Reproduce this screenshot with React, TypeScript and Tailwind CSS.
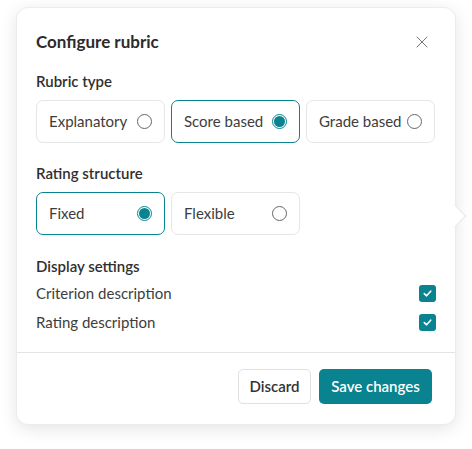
import { X } from "lucide-react"

const rubricTypes = [
  { id: "explanatory", label: "Explanatory", checked: false },
  { id: "score", label: "Score based", checked: true },
  { id: "grade", label: "Grade based", checked: false },
]

const ratingStructures = [
  { id: "fixed", label: "Fixed", checked: true },
  { id: "flexible", label: "Flexible", checked: false },
]

const displaySettings = ["Criterion description", "Rating description"]

function Radio({ checked }: { checked: boolean }) {
  if (checked) {
    return (
      <span className="flex h-[15px] w-[15px] items-center justify-center rounded-full border border-[#0a8390] bg-white">
        <span className="h-[11px] w-[11px] rounded-full bg-[#0a8390]" />
      </span>
    )
  }
  return <span className="h-[15px] w-[15px] rounded-full border border-[#666] bg-white" />
}

function Option({ label, checked }: { label: string; checked: boolean }) {
  return (
    <div
      className={`flex h-[43px] w-[129px] items-center justify-between rounded-[7px] border pl-[12px] pr-[12px] ${
        checked ? "border-[#0a8390]" : "border-[#e6e6e6]"
      }`}
    >
      <span className="text-[15px] text-[#3d3d3d]">{label}</span>
      <Radio checked={checked} />
    </div>
  )
}

function Checkbox() {
  return (
    <span className="flex h-[17px] w-[17px] items-center justify-center rounded-[3px] bg-[#0a8390]">
      <svg width="11" height="11" viewBox="0 0 12 12" fill="none">
        <path d="M2.5 6.2 5 8.5 9.5 3.5" stroke="white" strokeWidth="1.8" strokeLinecap="round" strokeLinejoin="round" />
      </svg>
    </span>
  )
}

export default function App() {
  return (
    <div className="min-h-[449px] bg-white pl-[17px] pt-[8px]" style={{ fontFamily: "Lato, 'Open Sans', sans-serif" }}>
      <div className="relative w-[438px] rounded-[11px] bg-white shadow-[0_4px_18px_rgba(0,0,0,0.12)] ring-1 ring-[#ececec]">
        <div className="absolute right-[-8px] top-[200px] h-[16px] w-[16px] rotate-45 border-r border-t border-[#e8e8e8] bg-white" />
        <div className="px-[19px] pb-[18px] pt-[22px]">
          <div className="flex h-[24px] items-center justify-between">
            <h2 className="text-[17px] font-bold text-[#2b2b2b]">Configure rubric</h2>
            <X className="mr-[4px] h-[20px] w-[20px] text-[#666]" strokeWidth={1.1} />
          </div>

          <div className="mt-[17px] text-[15px] font-semibold leading-[20px] text-[#2f2f2f]">Rubric type</div>
          <div className="mt-[9px] flex gap-[6px]">
            {rubricTypes.map((t) => (
              <Option key={t.id} label={t.label} checked={t.checked} />
            ))}
          </div>

          <div className="mt-[20px] text-[15px] font-semibold leading-[20px] text-[#2f2f2f]">Rating structure</div>
          <div className="mt-[9px] flex gap-[6px]">
            {ratingStructures.map((t) => (
              <Option key={t.id} label={t.label} checked={t.checked} />
            ))}
          </div>

          <div className="mt-[21px] text-[15px] font-semibold leading-[20px] text-[#2f2f2f]">Display settings</div>
          <div className="mt-[5px] flex flex-col gap-[5px]">
            {displaySettings.map((s) => (
              <div key={s} className="flex h-[24px] items-center justify-between">
                <span className="text-[15px] text-[#3d3d3d]">{s}</span>
                <Checkbox />
              </div>
            ))}
          </div>
        </div>

        <div className="flex justify-end gap-[8px] border-t border-[#e4e4e4] px-[23px] pb-[20px] pt-[16px]">
          <button className="h-[35px] w-[73px] rounded-[5px] border border-[#e0e0e0] text-[15px] font-semibold text-[#333]">
            Discard
          </button>
          <button className="h-[35px] w-[113px] rounded-[5px] bg-[#0a8390] text-[15px] font-semibold text-white">
            Save changes
          </button>
        </div>
      </div>
    </div>
  )
}
